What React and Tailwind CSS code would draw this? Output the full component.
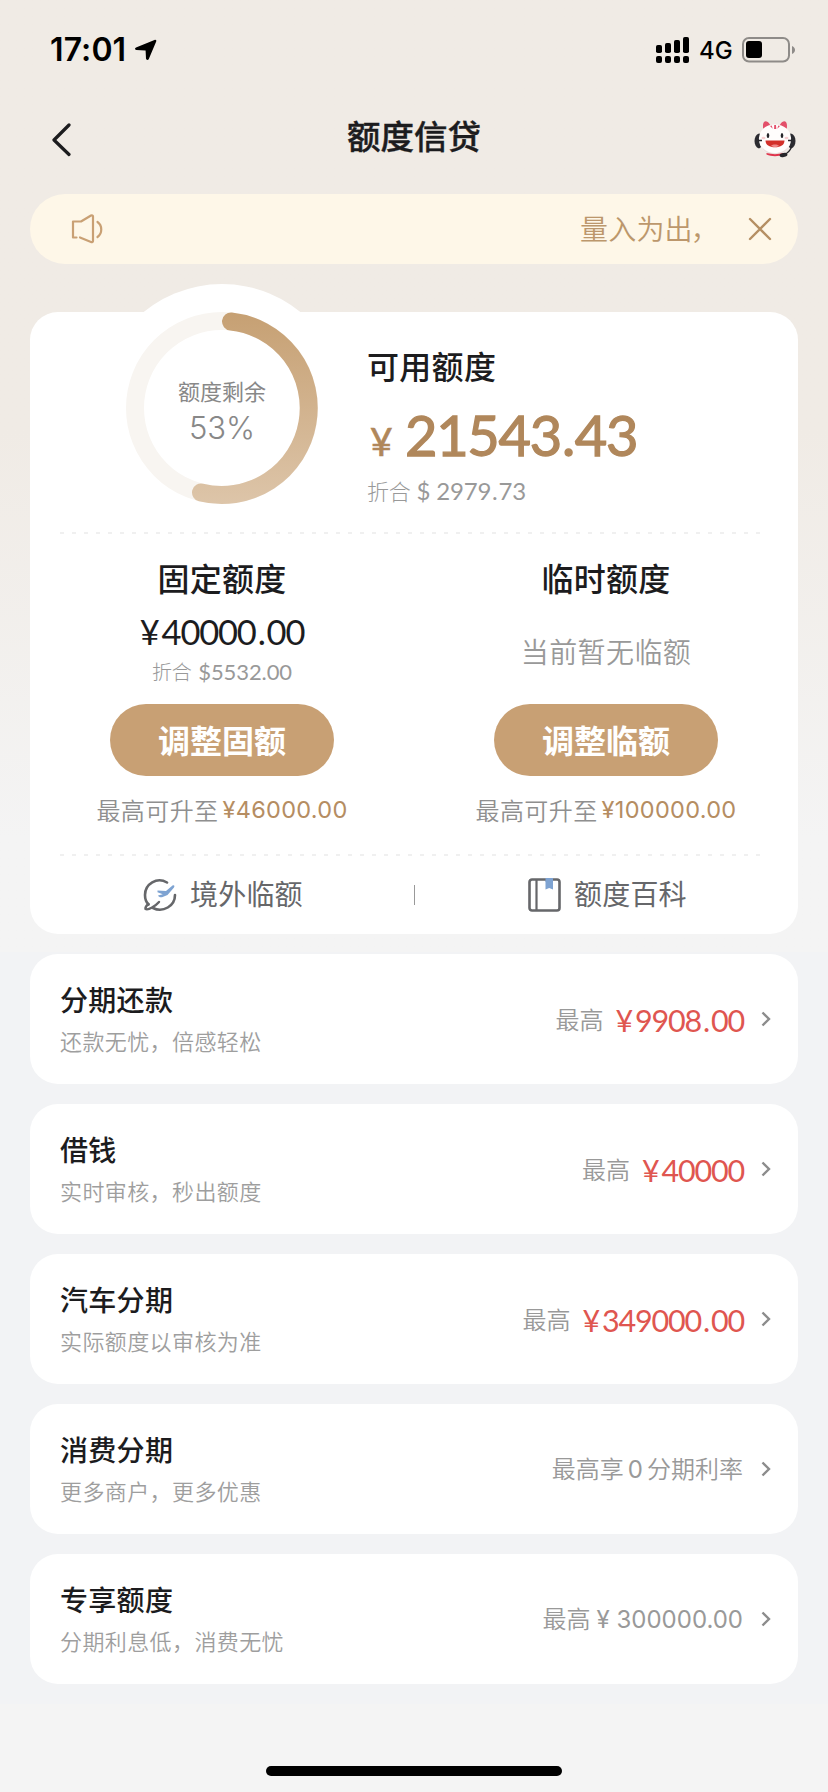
import React from 'react';
import { clsx } from 'clsx';

const LATO = "font-['Lato','Noto_Sans_CJK_SC',sans-serif]";
const INTER = "font-['Inter','Noto_Sans_CJK_SC',sans-serif]";

const products = [
  { title: '分期还款', desc: '还款无忧，倍感轻松', amount: '9908.00' },
  { title: '借钱', desc: '实时审核，秒出额度', amount: '40000' },
  { title: '汽车分期', desc: '实际额度以审核为准', amount: '349000.00' },
  { title: '消费分期', desc: '更多商户，更多优惠', note: 'rate' },
  { title: '专享额度', desc: '分期利息低，消费无忧', note: 'limit' },
];

const Money = ({ value, className }) => {
  const [whole, cents] = value.split('.');
  return (
    <span className={clsx(LATO, className)}>
      <span className="mr-[3px]">¥</span>
      {whole}
      {cents && (
        <>
          <span className="mx-[2px]">.</span>
          {cents}
        </>
      )}
    </span>
  );
};

const StatusBar = () => (
  <div className="flex h-[88px] items-center pl-[50px] pr-[32px] pt-[12px] text-black">
    <span className="font-['Inter',sans-serif] text-[32px] font-semibold leading-none tracking-[0.1px]">17:01</span>
    <svg className="ml-[8px]" width="24" height="22" viewBox="0 0 24 22">
      <path d="M2 8.500 20.500 1c1.300-.5 2.200.3 1.700 1.600L14.800 20c-.6 1.400-2.700 1.100-2.800-.5L11.600 11.600 2.300 11C.8 10.800.500 9.200 2 8.500Z" fill="#000" />
    </svg>
    <div className="ml-auto flex items-center">
      <svg width="34" height="26" viewBox="0 0 34 26">
        <rect x="0" y="8" width="6" height="8" rx="1.800" />
        <rect x="9" y="6" width="6" height="10" rx="1.800" />
        <rect x="18" y="3" width="6" height="13" rx="1.800" />
        <rect x="27" y="0" width="6" height="16" rx="1.800" />
        <rect x="0" y="19" width="6" height="7" rx="2" />
        <rect x="9" y="19" width="6" height="7" rx="2" />
        <rect x="18" y="19" width="6" height="7" rx="2" />
        <rect x="27" y="19" width="6" height="7" rx="2" />
      </svg>
      <span className="ml-[9px] mt-[2px] w-[43px] font-['Inter',sans-serif] text-[24px] font-medium leading-none">4G</span>
      <svg width="54" height="26" viewBox="0 0 54 26">
        <rect x="1" y="1" width="46" height="23.500" rx="6" fill="none" stroke="#8e8b88" strokeWidth="2" />
        <rect x="4" y="4" width="16" height="17" rx="3" />
        <path d="M50 9c4 1.500 4 6.500 0 8Z" fill="#8e8b88" />
      </svg>
    </div>
  </div>
);

const CatIcon = () => (
  <svg width="44" height="38" viewBox="0 0 44 38">
    <path d="M6 13.500C0 15 0 27 6 28.500l3-2v-12Z" fill="#2b2b30" />
    <path d="M38 13.500c6 1.500 6 13.500 0 15l-3-2v-12Z" fill="#2b2b30" />
    <path d="M10.500 10c-1.500-6 .5-9.500 3-8.500 2 .5 3 2 4 4.500ZM33.500 10c1.500-6-.5-9.500-3-8.500-2 .5-3 2-4 4.500Z" fill="#e3506a" />
    <path d="M22 4.500c9.500 0 15 5.500 16 13C39 27 31 35.500 22 35.500S5 27 6 17.500c1-7.500 6.500-13 16-13Z" fill="#fffdfc" />
    <path d="M8 26c3 7 10 9.500 14 9.500S33 33 36 26c-4 5-9 7-14 7s-10-2-14-7Z" fill="#eadfdd" />
    <path d="M21.200 5h1.800l.3 4h-2.200ZM17 6l1.700-.5 1 3.200ZM27 6l-1.700-.5-1 3.200Z" fill="#e3506a" />
    <ellipse cx="15" cy="15.500" rx="1.300" ry="2.500" fill="#26262a" />
    <ellipse cx="29" cy="15.500" rx="1.300" ry="2.500" fill="#26262a" />
    <ellipse cx="10.500" cy="18" rx="2" ry="1.200" fill="#f7cdd0" />
    <ellipse cx="33.500" cy="18" rx="2" ry="1.200" fill="#f7cdd0" />
    <path d="M12.500 20.500h19c0 4.500-4 6.800-9.500 6.800s-9.500-2.300-9.500-6.800Z" fill="#d2302a" />
    <path d="M18 25.800c2-1.800 6-1.800 8 0-2 1.600-6 1.600-8 0Z" fill="#f08a8a" />
    <path d="M13.500 33c5.500 1.500 11.500 1.500 17 0v1.500c-5 2.200-12 2.200-17 0Z" fill="#e0354d" />
    <path d="M5 20.500h4M35 20.500h4M39 26c-2 5-4 7.500-8 8.500" fill="none" stroke="#26262a" strokeWidth="1.300" />
    <ellipse cx="30.500" cy="35" rx="4" ry="2" fill="#26262a" transform="rotate(-12 30.500 35)" />
  </svg>
);

const NavBar = () => (
  <div className="flex h-[106px] items-start justify-between pl-[51px] pr-[31px]">
    <svg className="mt-[35px]" width="44" height="34" viewBox="0 0 44 34">
      <path d="M18 2 3 17l15 14.500" fill="none" stroke="#1c1c1e" strokeWidth="3.200" strokeLinecap="round" strokeLinejoin="round" />
    </svg>
    <h1 className="mt-[23px] mr-[20px] font-['Noto_Sans_CJK_SC',sans-serif] text-[33.500px] font-medium leading-[48px] text-[#1c1c1e] [-webkit-text-stroke:0.4px_#1c1c1e]">额度信贷</h1>
    <div className="mt-[32px]">
      <CatIcon />
    </div>
  </div>
);

const Notice = () => (
  <div className="mx-[30px] flex h-[70px] items-center rounded-full bg-[#fef7e8] pl-[41px] pr-[26px] text-[#bc976c]">
    <svg width="34" height="32" viewBox="0 0 34 32" fill="none" stroke="#c9a074" strokeWidth="2.200" strokeLinecap="round" strokeLinejoin="round">
      <path d="M5.500 24.500H2V8.500h8L20 2.500c1-.5 2 0 2 1v24.500c0 1-1 1.500-2 1L9 24.500" />
      <path d="M26.500 9c5 3.500 5 11.500 0 15" />
    </svg>
    <span className="ml-auto -mt-[2px] w-[168px] whitespace-nowrap font-['Noto_Sans_CJK_SC',sans-serif] text-[28px] font-[350] leading-[40px] tracking-[0.2px]">
      量入为出<span className="-ml-[2px]">，</span>
    </span>
    <svg width="24" height="24" viewBox="0 0 24 24">
      <path d="m2 2 20 20M22 2 2 22" stroke="#b58f63" strokeWidth="2.400" strokeLinecap="round" />
    </svg>
  </div>
);

const Ring = () => (
  <div className="relative -mt-7 ml-[68px] h-[248px] w-[248px] shrink-0">
    <svg width="248" height="248" viewBox="0 0 248 248">
      <defs>
        <linearGradient id="ring" gradientUnits="userSpaceOnUse" x1="124" y1="28" x2="124" y2="220">
          <stop offset="0" stopColor="#c6a073" />
          <stop offset="1" stopColor="#ddc5a9" />
        </linearGradient>
      </defs>
      <circle cx="124" cy="124" r="124" fill="#fff" />
      <circle cx="124" cy="124" r="87" fill="none" stroke="#f8f5f1" strokeWidth="18" />
      <path d="M133 37.500A87 87 0 1 1 103 208.500" fill="none" stroke="url(#ring)" strokeWidth="18" strokeLinecap="round" />
    </svg>
    <div className="absolute inset-0 flex flex-col items-center pt-[90px] text-[#888]">
      <span className="font-['Noto_Sans_CJK_SC',sans-serif] text-[22px] leading-[32px]">额度剩余</span>
      <span className="mt-[2px] font-['Inter',sans-serif] text-[31px] font-[350] leading-[40px]">53%</span>
    </div>
  </div>
);

const Dashes = () => (
  <svg className="ml-[30px] block" width="702" height="2">
    <path d="M0 1h702" stroke="#ebebeb" strokeWidth="1.500" strokeDasharray="4 8" />
  </svg>
);

const LimitColumn = ({ title, button, max, children }) => (
  <div className="flex w-[384px] flex-col items-center pt-[23px]">
    <h2 className="font-['Noto_Sans_CJK_SC',sans-serif] text-[32px] font-medium leading-[40px] tracking-[0.3px] text-[#1c1c1e]">{title}</h2>
    <div className="flex h-[107px] flex-col items-center">{children}</div>
    <button className="h-[72px] w-[224px] rounded-full bg-[#c8a074] pb-[3px] font-['Noto_Sans_CJK_SC',sans-serif] text-[32px] font-bold text-white">{button}</button>
    <div className="mt-[13px] flex items-center leading-[40px]">
      <span className="font-['Noto_Sans_CJK_SC',sans-serif] text-[24px] font-[350] tracking-[0.4px] text-[#8f8f8f]">最高可升至</span>
      <span className={clsx(INTER, 'ml-[4px] mt-[1px] text-[23.500px] tracking-[0.3px] text-[#b58d62]')}>¥{max}</span>
    </div>
  </div>
);

const PlaneIcon = () => (
  <svg width="34" height="34" viewBox="0 0 34 34" fill="none">
    <path d="M24 4.500C14 -1.500 2 6 2 17c0 4 1 7 3.500 9.500M32 17c0 11-12 18-22 13" stroke="#66676a" strokeWidth="2.600" strokeLinecap="round" />
    <path d="M5.500 26c-2 1.500-3.500 3-3 5 3 1.500 10-3 13.500-7" stroke="#66676a" strokeWidth="2.400" strokeLinecap="round" strokeLinejoin="round" />
    <path d="M29.500 7.500c2-.6 2.500.8 1.300 2.200L24.500 17l-5.500 2.200c-1.500.5-3.500-.2-4-1.700l4.800-1.300-5.300-2v-1.700l8.500.5Z" fill="#7ea3d2" />
  </svg>
);

const BookIcon = () => (
  <svg width="34" height="34" viewBox="0 0 34 34" fill="none">
    <path d="M17.500 2h7.500v9.500l-3.800-1.500-3.700 1.500Z" fill="#7ea3d2" />
    <rect x="1.500" y="1.500" width="30" height="31" rx="2.500" stroke="#66676a" strokeWidth="2.600" />
    <path d="M8.500 2v30" stroke="#66676a" strokeWidth="2.200" />
    <path d="M17.500 0h7.500v4h-7.500Z" fill="#7ea3d2" />
  </svg>
);

const QuotaCard = () => (
  <section className="mx-[30px] mt-[48px] h-[622px] rounded-[28px] bg-white">
    <div className="flex h-[220px]">
      <Ring />
      <div className="ml-[21px] pt-[33px]">
        <h2 className="font-['Noto_Sans_CJK_SC',sans-serif] text-[32px] font-medium leading-[40px] tracking-[0.3px] text-[#1c1c1e]">可用额度</h2>
        <div className="mt-[18px] flex items-baseline font-['Lato',sans-serif] leading-[64px] text-[#b0875b]">
          <span className="ml-[3px] w-[35px] text-[39px] [-webkit-text-stroke:0.6px_#b0875b]">¥</span>
          <span className="text-[56px] tracking-[-1.300px] [-webkit-text-stroke:1.300px_#b0875b]">
            21543<span className="mx-[1px]">.</span>43
          </span>
        </div>
        <p className={clsx(LATO, '-mt-[2px] text-[24px] leading-[40px] tracking-[-0.2px] text-[#999]')}>
          <span className="text-[22px] font-light">折合</span> $ 2979<span className="mx-[1px]">.</span>73
        </p>
      </div>
    </div>
    <Dashes />
    <div className="flex h-[320px]">
      <LimitColumn title="固定额度" button="调整固额" max="46000.00">
        <Money value="40000.00" className="pt-[5px] text-[34.500px] leading-[60px] tracking-[-1.200px] text-[#1c1c1e]" />
        <span className={clsx(LATO, 'text-[22px] leading-[20px] tracking-[-0.1px] text-[#999]')}>
          <span className="mr-[1px] text-[20px] font-light">折合</span> $5532.00
        </span>
      </LimitColumn>
      <LimitColumn title="临时额度" button="调整临额" max="100000.00">
        <span className="pt-[34px] font-['Noto_Sans_CJK_SC',sans-serif] text-[28px] font-[350] leading-[40px] tracking-[0.4px] text-[#999]">当前暂无临额</span>
      </LimitColumn>
    </div>
    <Dashes />
    <div className="flex h-[77px] items-center font-['Noto_Sans_CJK_SC',sans-serif] text-[28px] leading-[40px] text-[#66676a]">
      <div className="flex w-[384px] items-center gap-[13px] pl-[113px]">
        <PlaneIcon />
        <span className="-mt-[4px] tracking-[0.2px]">境外临额</span>
      </div>
      <div className="h-[20px] w-px bg-[#999]" />
      <div className="flex items-center gap-[12px] pl-[113px]">
        <BookIcon />
        <span className="-mt-[4px] tracking-[0.2px]">额度百科</span>
      </div>
    </div>
  </section>
);

const ProductRow = ({ item }) => (
  <div className="flex h-[130px] items-center rounded-[28px] bg-white pl-[30px] pr-[26px]">
    <div className="-mt-[2px] flex flex-col font-['Noto_Sans_CJK_SC',sans-serif]">
      <h3 className="text-[28px] font-medium leading-[44px] tracking-[0.3px] text-[#1c1c1e]">{item.title}</h3>
      <p className="text-[22px] font-[350] leading-[38px] tracking-[0.4px] text-[#9e9e9e]">{item.desc}</p>
    </div>
    <div className="ml-auto flex items-center leading-[40px] text-[#999]">
      {item.amount && (
        <>
          <span className="font-['Noto_Sans_CJK_SC',sans-serif] text-[24px] font-[350]">最高</span>
          <Money value={item.amount} className="ml-[12px] mt-[1px] mr-[-1px] text-[30.500px] tracking-[-1.200px] text-[#df5650]" />
        </>
      )}
      {item.note === 'rate' && (
        <span className={clsx(INTER, 'mt-[2px] text-[24px] font-[350]')}>
          最高享<span className="mx-[4px] font-normal">0</span>分期利率
        </span>
      )}
      {item.note === 'limit' && (
        <span className={clsx(INTER, 'mt-[2px] text-[24px] font-[350]')}>
          最高<span className="ml-[6px] font-normal">¥ 300000.00</span>
        </span>
      )}
      <svg className="ml-[17px]" width="12" height="18" viewBox="0 0 12 18">
        <path d="m2.500 2.500 6.500 6.500L2.500 15.500" fill="none" stroke="#8c8c8c" strokeWidth="2.400" />
      </svg>
    </div>
  </div>
);

const App = () => {
  return (
    <div className="flex h-[1792px] w-[828px] flex-col overflow-hidden bg-[#f4f4f4]">
      <div className="h-[952px] bg-linear-to-b from-[#f0ebe5] from-45% to-[#f4f4f4] to-88%">
        <StatusBar />
        <NavBar />
        <Notice />
        <QuotaCard />
      </div>
      <div className="flex h-[752px] flex-col gap-[20px] bg-[#f2f3f5] px-[30px] pt-[2px]">
        {products.map((item) => (
          <ProductRow key={item.title} item={item} />
        ))}
      </div>
      <div className="flex flex-1 items-end justify-center pb-[16px]">
        <div className="h-[10px] w-[296px] rounded-full bg-black" />
      </div>
    </div>
  );
};

export default App;
